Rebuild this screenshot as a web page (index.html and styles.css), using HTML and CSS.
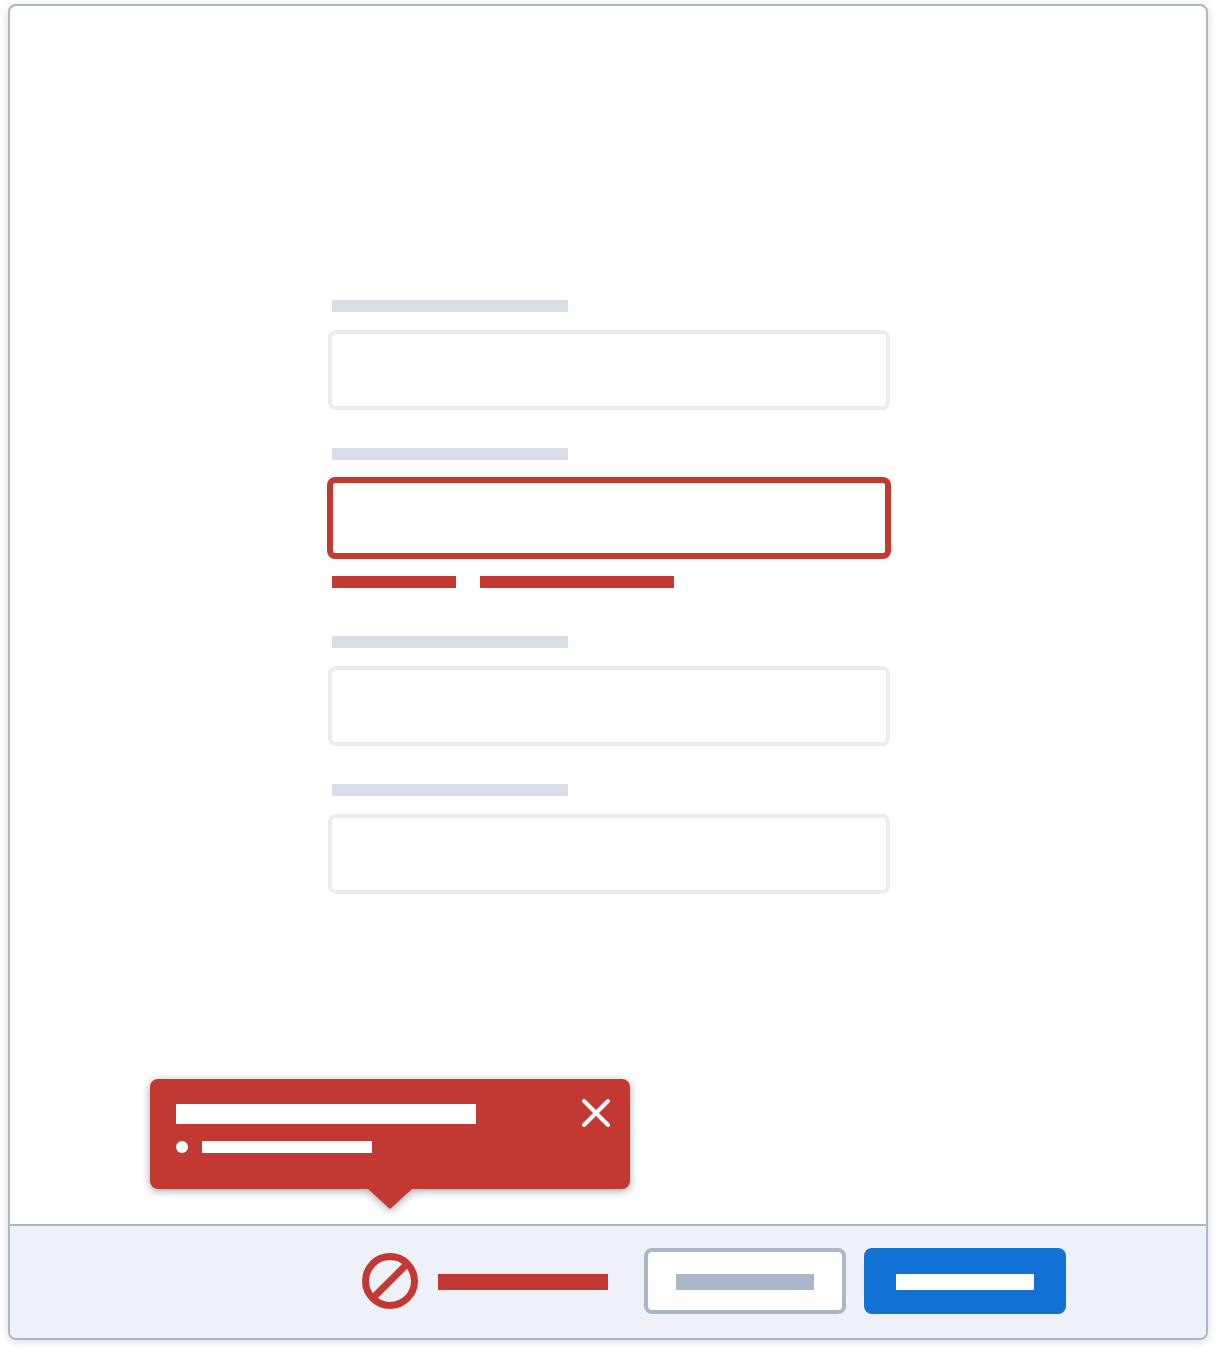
FILE: index.html
```html
<!DOCTYPE html>
<html lang="en">
<head>
<meta charset="utf-8">
<title>Form validation error</title>
<link rel="stylesheet" href="styles.css">
</head>
<body>
<div class="window">
  <main class="main">
    <form class="form">
      <div class="field">
        <div class="label"></div>
        <div class="input"></div>
      </div>
      <div class="field">
        <div class="label"></div>
        <div class="input input-error"></div>
        <div class="error-row">
          <span class="error-bar error-bar-short"></span>
          <span class="error-bar error-bar-long"></span>
        </div>
      </div>
      <div class="field">
        <div class="label"></div>
        <div class="input"></div>
      </div>
      <div class="field">
        <div class="label"></div>
        <div class="input"></div>
      </div>
    </form>
  </main>
  <footer class="footer">
    <div class="status">
      <div class="status-icon">
        <svg class="ban" width="56" height="56" viewBox="0 0 56 56" fill="none" stroke="#c23934" stroke-width="7">
          <circle cx="28" cy="28" r="24.5"/>
          <path d="M10.5 45.5 45.5 10.5"/>
        </svg>
        <div class="popover">
          <div class="popover-box">
            <div class="popover-body">
              <div class="popover-title"></div>
              <div class="popover-item">
                <span class="dot"></span>
                <span class="item-bar"></span>
              </div>
            </div>
            <svg class="close" width="30" height="30" viewBox="0 0 30 30" fill="none" stroke="#fff" stroke-width="4" stroke-linecap="round">
              <path d="M3 3 27 27M27 3 3 27"/>
            </svg>
          </div>
          <svg class="notch" width="44" height="20" viewBox="0 0 44 20"><path d="M0 0H44L22 20Z" fill="#c23934"/></svg>
        </div>
      </div>
      <span class="status-bar"></span>
    </div>
    <div class="btn btn-secondary"><span class="btn-bar"></span></div>
    <div class="btn btn-primary"><span class="btn-bar"></span></div>
  </footer>
</div>
</body>
</html>
```

FILE: styles.css
```css
* {
  box-sizing: border-box;
}

html,
body {
  margin: 0;
  background: #fff;
}

.window {
  display: flex;
  flex-direction: column;
  height: 1336px;
  margin: 4px 8px 12px;
  background: #fff;
  border: 2px solid #a8b8c9;
  border-radius: 8px;
  box-shadow: 0 2px 8px rgba(0, 0, 0, 0.14);
  overflow: visible;
}

.main {
  flex: 1;
  padding: 294px 0 0 318px;
}

.form {
  display: flex;
  flex-direction: column;
  gap: 38px;
  width: 562px;
}

.label {
  width: 236px;
  height: 12px;
  margin: 0 0 18px 4px;
  background: #d8dde6;
}

.input {
  height: 80px;
  background: #fff;
  border: 4px solid #ecebf3;
  border-radius: 8px;
}

.input-error {
  height: 82px;
  margin: -1px;
  border: 6px solid #c23934;
}

.error-row {
  display: flex;
  gap: 24px;
  margin: 18px 0 10px 4px;
}

.error-bar {
  height: 12px;
  background: #c23934;
}

.error-bar-short {
  width: 124px;
}

.error-bar-long {
  width: 194px;
}

.footer {
  display: flex;
  align-items: center;
  justify-content: flex-end;
  gap: 18px;
  height: 114px;
  padding: 22px 140px 24px 0;
  background: #eef1f8;
  border-top: 2px solid #a8b8c9;
  border-radius: 0 0 6px 6px;
}

.status {
  display: flex;
  align-items: center;
  gap: 20px;
  margin-right: 18px;
}

.status-icon {
  position: relative;
  width: 56px;
  height: 56px;
}

.ban {
  display: block;
}

.status-bar {
  width: 170px;
  height: 16px;
  margin-top: 2px;
  background: #c23934;
}

.popover {
  position: absolute;
  left: 50%;
  bottom: calc(100% + 45px);
  width: 480px;
  transform: translateX(-50%);
  filter: drop-shadow(0 2px 4px rgba(0, 0, 0, 0.35));
}

.popover-box {
  display: flex;
  justify-content: space-between;
  align-items: flex-start;
  height: 110px;
  padding: 25px 19px 0 26px;
  background: #c23934;
  border-radius: 8px;
}

.popover-title {
  width: 300px;
  height: 20px;
  background: #fff;
}

.popover-item {
  display: flex;
  align-items: center;
  gap: 14px;
  margin-top: 17px;
}

.dot {
  width: 12px;
  height: 12px;
  background: #fff;
  border-radius: 50%;
}

.item-bar {
  width: 170px;
  height: 12px;
  background: #fff;
}

.close {
  display: block;
  margin-top: -6px;
}

.notch {
  display: block;
  margin: -1px auto 0;
  transform: translateY(1px);
}

.btn {
  display: flex;
  align-items: center;
  justify-content: center;
  width: 202px;
  height: 66px;
  padding-top: 2px;
  border-radius: 8px;
}

.btn-bar {
  width: 138px;
  height: 16px;
}

.btn-secondary {
  background: #fff;
  border: 4px solid #a8b8c9;
}

.btn-secondary .btn-bar {
  background: #a8b8c9;
}

.btn-primary {
  background: #1172d3;
}

.btn-primary .btn-bar {
  background: #fff;
}
```
